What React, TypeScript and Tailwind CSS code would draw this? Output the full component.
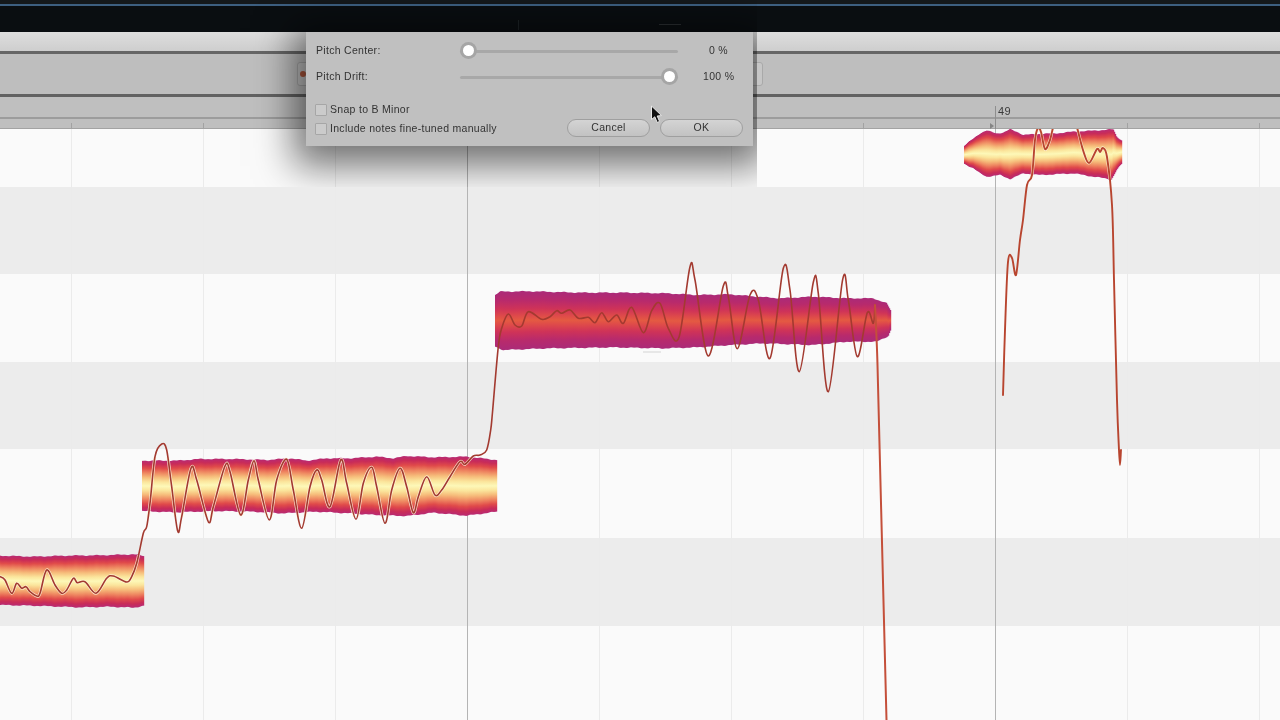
const GRID = [71, 203, 335, 467, 599, 731, 863, 995, 1127, 1259];
const BAR_LINES = [467, 995];

type Pt = [number, number];

// points were read off 3x crops
const crop = (pts: number[][], ox: number, oy: number): Pt[] =>
  pts.map(([x, y]) => [x / 3 + ox, y / 3 + oy]);

const smooth = (pts: Pt[]) => {
  let d = `M${pts[0][0]} ${pts[0][1]}`;
  for (let i = 0; i < pts.length - 1; i++) {
    const p0 = pts[i - 1] || pts[i];
    const p1 = pts[i];
    const p2 = pts[i + 1];
    const p3 = pts[i + 2] || p2;
    const c1x = p1[0] + (p2[0] - p0[0]) / 6;
    const c1y = p1[1] + (p2[1] - p0[1]) / 6;
    const c2x = p2[0] - (p3[0] - p1[0]) / 6;
    const c2y = p2[1] - (p3[1] - p1[1]) / 6;
    d += ` C${c1x.toFixed(1)} ${c1y.toFixed(1)} ${c2x.toFixed(1)} ${c2y.toFixed(1)} ${p2[0].toFixed(1)} ${p2[1].toFixed(1)}`;
  }
  return d;
};

const edgeAt = (pts: Pt[], x: number) => {
  for (let i = 0; i < pts.length - 1; i++) {
    if (x >= pts[i][0] && x <= pts[i + 1][0]) {
      const t = (x - pts[i][0]) / (pts[i + 1][0] - pts[i][0] || 1);
      return pts[i][1] + (pts[i + 1][1] - pts[i][1]) * t;
    }
  }
  return x < pts[0][0] ? pts[0][1] : pts[pts.length - 1][1];
};

const note1Top = crop([[0, 377], [100, 380], [200, 377], [300, 376], [400, 373], [432, 378]], 0, 430);
const note1Bot = crop([[0, 525], [100, 527], [240, 532], [330, 530], [400, 533], [432, 527]], 0, 430);
const note2Top = crop([[425, 92], [530, 92], [600, 87], [700, 87], [800, 90], [870, 85], [920, 92], [980, 85], [1050, 85], [1130, 80], [1180, 85], [1220, 78], [1300, 82], [1400, 80], [1490, 90]], 0, 430);
const note2Bot = crop([[425, 243], [520, 247], [650, 243], [760, 245], [850, 250], [950, 245], [1050, 250], [1130, 255], [1220, 258], [1300, 248], [1400, 257], [1490, 245]], 0, 430);
const note3Top = crop([[45, 135], [60, 125], [150, 124], [300, 128], [430, 128], [560, 130], [650, 135], [750, 133], [830, 140], [900, 145], [1000, 140], [1100, 145], [1180, 145], [1220, 160], [1234, 185]], 480, 250);
const note3Bot = crop([[45, 290], [70, 300], [200, 295], [400, 292], [550, 295], [650, 292], [750, 285], [850, 280], [1000, 285], [1100, 275], [1190, 275], [1225, 258], [1234, 235]], 480, 250);
const note4Top = crop([[370, 440], [400, 415], [420, 400], [440, 392], [470, 400], [490, 398], [510, 388], [530, 395], [550, 405], [590, 402], [650, 400], [700, 395], [760, 392], [820, 388], [830, 410], [847, 422]], 840, 0);
const note4Bot = crop([[370, 490], [400, 505], [420, 520], [440, 530], [480, 525], [510, 537], [550, 520], [600, 525], [700, 520], [760, 530], [815, 538], [830, 510], [847, 490]], 840, 0);

const NOTES = [
  { id: "warm", from: 0, to: 144, top: note1Top, bot: note1Bot },
  { id: "warm", from: 142, to: 497, top: note2Top, bot: note2Bot },
  { id: "hot", from: 495, to: 891, top: note3Top, bot: note3Bot },
  { id: "warm", from: 964, to: 1122, top: note4Top, bot: note4Bot },
];

const curveA = smooth([
  ...crop([[0, 440], [15, 450], [35, 490], [50, 460], [65, 475], [78, 470], [90, 485], [110, 498], [120, 490], [140, 420], [165, 465], [185, 490], [200, 480], [220, 445], [232, 458], [255, 455], [288, 490], [320, 445], [340, 438], [380, 456], [395, 440], [410, 400], [430, 310], [440, 290], [450, 220], [465, 80], [485, 42], [500, 60], [515, 170], [533, 303], [545, 260], [573, 115], [590, 150], [625, 275], [640, 230], [675, 108], [690, 125], [722, 255], [745, 150], [762, 92], [775, 150], [808, 270], [830, 150], [860, 88], [880, 180], [905, 295], [930, 170], [950, 120], [965, 150], [990, 230], [1022, 90], [1040, 160], [1068, 268], [1090, 160], [1115, 112], [1130, 170], [1155, 280], [1175, 180], [1200, 115], [1220, 170], [1240, 248], [1255, 200], [1280, 140], [1305, 195], [1325, 180], [1350, 140], [1380, 95], [1395, 103], [1420, 78], [1440, 75], [1460, 60], [1472, 0]], 0, 430),
  ...crop([[38, 480], [55, 290], [65, 235], [85, 192], [105, 225], [125, 228], [145, 185], [185, 208], [210, 200], [230, 182], [245, 190], [270, 180], [295, 205], [325, 202], [345, 218], [365, 188], [385, 215], [410, 195], [430, 220], [455, 172], [490, 248], [515, 182], [540, 160], [565, 235], [597, 262], [630, 50], [645, 90], [685, 318], [730, 108], [745, 140], [772, 296], [810, 135], [835, 150], [870, 325], [910, 55], [930, 120], [958, 365], [1000, 97], [1015, 130], [1045, 425], [1088, 88], [1105, 150], [1132, 320], [1162, 188], [1180, 220], [1185, 165]], 480, 250),
]);

const curveDrop = "M875 305 C876 325 877 345 877.5 365 L886.5 720";

const curveB = smooth([
  [1003, 395], [1005, 330], [1008, 262], [1012, 258], [1016, 275], [1020, 240], [1023, 220], [1027, 185], [1032, 175], [1035, 140], [1038, 128], [1041, 132], [1045, 149], [1050, 140], [1054, 124], [1060, 110], [1070, 110], [1076, 124], [1083, 150], [1089, 163], [1097, 149], [1100, 152], [1103, 148], [1107, 157], [1112, 205], [1114, 280], [1117, 400], [1119, 450], [1120, 465], [1121, 450],
]);

const PianoRoll = () => (
  <svg className="absolute inset-0" width="1280" height="591" viewBox="0 129 1280 591">
    <defs>
      <linearGradient id="warm" x1="0" y1="0" x2="0" y2="1">
        <stop offset="0" stopColor="#b82a72" />
        <stop offset="0.07" stopColor="#c92c58" />
        <stop offset="0.15" stopColor="#e04a4a" />
        <stop offset="0.24" stopColor="#ee8560" />
        <stop offset="0.33" stopColor="#f6bb7a" />
        <stop offset="0.42" stopColor="#fbe59c" />
        <stop offset="0.5" stopColor="#fdf8b8" />
        <stop offset="0.58" stopColor="#fbe59c" />
        <stop offset="0.67" stopColor="#f6bb7a" />
        <stop offset="0.76" stopColor="#ee8560" />
        <stop offset="0.85" stopColor="#e04a4a" />
        <stop offset="0.93" stopColor="#c92c58" />
        <stop offset="1" stopColor="#b82a72" />
      </linearGradient>
      <linearGradient id="hot" x1="0" y1="0" x2="0" y2="1">
        <stop offset="0" stopColor="#ab2a78" />
        <stop offset="0.15" stopColor="#b82a6c" />
        <stop offset="0.3" stopColor="#cf3358" />
        <stop offset="0.42" stopColor="#de4a4a" />
        <stop offset="0.5" stopColor="#e45a42" />
        <stop offset="0.58" stopColor="#de4a4a" />
        <stop offset="0.7" stopColor="#cf3358" />
        <stop offset="0.85" stopColor="#b82a6c" />
        <stop offset="1" stopColor="#ab2a78" />
      </linearGradient>
      <clipPath id="halo">
        <rect x="0" y="555" width="144" height="52" />
        <rect x="142" y="457" width="355" height="60" />
        <rect x="964" y="129" width="158" height="50" />
      </clipPath>
    </defs>
    {NOTES.map((n) => {
      const cols = [];
      for (let x = n.from; x < n.to; x++) {
        const jitter = Math.sin(x * 0.9) * 0.2 + Math.sin(x * 0.31) * 0.35;
        const y1 = edgeAt(n.top, x + 0.5) + jitter;
        const y2 = edgeAt(n.bot, x + 0.5) - jitter;
        cols.push(
          <rect key={x} x={x} y={y1} width={1.2} height={y2 - y1} fill={`url(#${n.id})`} />
        );
      }
      return <g key={n.from}>{cols}</g>;
    })}
    <g fill="none" strokeLinejoin="round" strokeLinecap="round">
      <g clipPath="url(#halo)" stroke="#fff3dc" strokeWidth="3" opacity="0.85">
        <path d={curveA} />
        <path d={curveB} />
      </g>
      <path d={curveA} stroke="#a33a30" strokeWidth="1.6" />
      <path d={curveDrop} stroke="#c44f3a" strokeWidth="2" />
      <path d={curveB} stroke="#b8452f" strokeWidth="1.9" />
    </g>
    <path d="M643 352H661" stroke="#d4d4d4" strokeWidth="1" />
  </svg>
);

const Slider = ({ value }: { value: number }) => (
  <div className="relative flex h-4 w-[218px] items-center">
    <div className="h-[3px] w-full rounded-full bg-[#a8a8a8]" />
    <div
      className="absolute -top-px flex h-[17px] w-[17px] items-center justify-center rounded-full bg-[#a5a5a5]"
      style={{ left: value === 0 ? 0 : 201 }}
    >
      <div className="h-[11px] w-[11px] rounded-full bg-white" />
    </div>
  </div>
);

const Check = ({ label }: { label: string }) => (
  <div className="flex h-[19px] items-center gap-[3px]">
    <div className="h-3 w-3 rounded-[1px] border border-[#a6a6a6] bg-[#cbcbcb]" />
    <span>{label}</span>
  </div>
);

const Button = ({ label }: { label: string }) => (
  <div className="flex h-[18px] w-[83px] items-center justify-center rounded-full border border-[#9f9f9f] bg-gradient-to-b from-[#d4d4d4] to-[#c2c2c2]">
    {label}
  </div>
);

const Dialog = () => (
  <div className="absolute left-[306px] top-8 h-[114px] w-[447px] bg-[#c0c0c0] px-[10px] pt-[11px] text-[10.5px] tracking-[0.3px] text-[#333333] shadow-[0_8px_36px_12px_rgba(0,0,0,0.55)]">
    <div className="flex h-4 items-center">
      <span className="w-[144px]">Pitch Center:</span>
      <Slider value={0} />
      <span className="ml-[31px]">0 %</span>
    </div>
    <div className="mt-[10px] flex h-4 items-center">
      <span className="w-[144px]">Pitch Drift:</span>
      <Slider value={100} />
      <span className="ml-[25px]">100 %</span>
    </div>
    <div className="mt-[15px] flex items-start">
      <div className="-ml-px w-[253px]">
        <Check label="Snap to B Minor" />
        <Check label="Include notes fine-tuned manually" />
      </div>
      <div className="mt-[19px] flex gap-[10px] text-[#333]">
        <Button label="Cancel" />
        <Button label="OK" />
      </div>
    </div>
  </div>
);

export default function App() {
  return (
    <div className="relative flex h-[720px] w-[1280px] flex-col overflow-hidden bg-[#fafafa] blur-[0.5px] [font-family:'Liberation_Sans',Arial,sans-serif]">
      {/* black strip */}
      <div className="relative h-8 bg-[#0a0e11]">
        <div className="h-1 bg-[#14181b]" />
        <div className="h-[2px] bg-[#3d5f80]" />
        <div className="absolute left-[518px] top-5 h-[10px] w-px bg-[#1d2326]" />
        <div className="absolute left-[659px] top-6 h-px w-[22px] bg-[#2b2f31]" />
      </div>

      {/* toolbars */}
      <div className="h-[19px] bg-gradient-to-b from-[#dedede] to-[#cecece]" />
      <div className="h-[3px] bg-[#666666]" />
      <div className="flex h-[40px] items-center bg-[#bebebe]">
        <div className="ml-[297px] flex h-6 w-[466px] items-center rounded-[3px] border border-[#a9a9a9] bg-[#c6c6c6] pl-[2px]">
          <div className="h-[6px] w-[6px] rounded-full bg-[#b2593e]" />
        </div>
      </div>
      <div className="h-[3px] bg-[#626262]" />

      {/* ruler */}
      <div className="relative h-[32px] bg-[#bfbfbf]">
        <div className="h-[20px]" />
        <div className="h-[2px] bg-[#9c9c9c]" />
        <div className="h-[9px]" />
        <div className="h-px bg-[#a3a3a3]" />
        {GRID.map((x) => (
          <div key={x} className="absolute top-[26px] h-[6px] w-px bg-[#a2a2a2]" style={{ left: x }} />
        ))}
        <div className="absolute left-[995px] top-[9px] h-[23px] w-px bg-[#8e8e8e]" />
        <span className="absolute left-[998px] top-[7px] text-[11px] leading-[14px] tracking-[0.3px] text-[#3a3a3a]">49</span>
        <div className="absolute left-[990px] top-[26px] h-0 w-0 border-y-[3px] border-l-[4px] border-y-transparent border-l-[#858585]" />
      </div>

      {/* piano roll */}
      <div className="relative flex-1">
        <div className="h-[58px] bg-[#fafafa]" />
        <div className="h-[87px] bg-[#ececec]" />
        <div className="h-[88px] bg-[#fafafa]" />
        <div className="h-[87px] bg-[#ececec]" />
        <div className="h-[89px] bg-[#fafafa]" />
        <div className="h-[88px] bg-[#ececec]" />
        <div className="h-[94px] bg-[#fafafa]" />
        {GRID.map((x) => (
          <div
            key={x}
            className={`absolute inset-y-0 w-px ${BAR_LINES.includes(x) ? "bg-[#b4b4b4]" : "bg-[#ebebeb]"}`}
            style={{ left: x }}
          />
        ))}
        <PianoRoll />
      </div>

      {/* dialog, its shadow stops short the way the capture does */}
      <div className="absolute left-[226px] top-0 h-[187px] w-[531px] overflow-hidden">
        <div className="absolute -left-[226px] top-0 h-[187px] w-[1280px]">
          <Dialog />
        </div>
      </div>

      <svg className="absolute left-[648px] top-[104px]" width="16" height="22" viewBox="0 0 16 22">
        <path d="M3.5 2 L3.5 15.5 L6.8 12.8 L9.2 18.5 L11.6 17.4 L9.2 12 L13.5 11.6 Z" fill="#111" stroke="#e8e8e8" strokeWidth="1" />
      </svg>
    </div>
  );
}
